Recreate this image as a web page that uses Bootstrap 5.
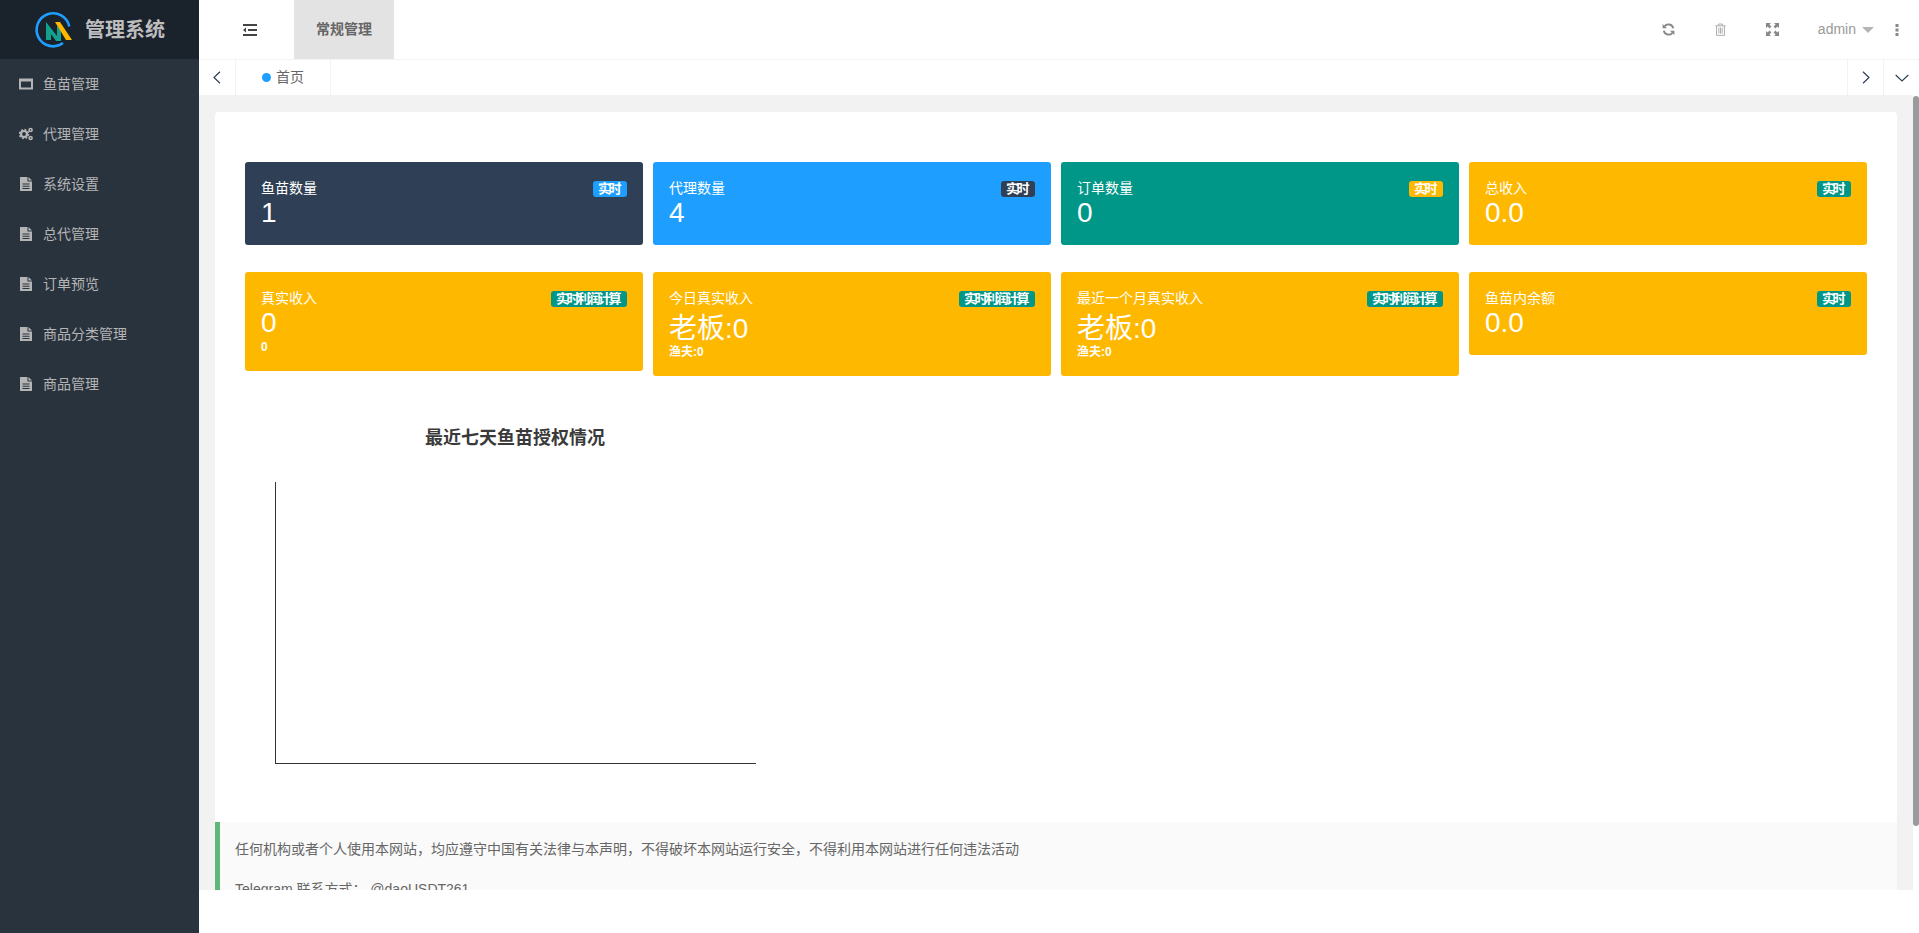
<!doctype html>
<html lang="zh-CN">
<head>
<meta charset="utf-8">
<title>管理系统</title>
<link rel="stylesheet" href="https://cdn.jsdelivr.net/npm/bootstrap@5.3.0/dist/css/bootstrap.min.css">
<style>
html,body{height:100%;overflow:hidden;background:#fff}
body{font-family:"Liberation Sans","Noto Sans CJK SC",sans-serif;font-size:14px;color:#666}
.shell{height:933px}
.side-col{width:199px;flex:none;background:#29333e}
.brand-bar{height:59px;background:#1a222c;color:#bdbdbd;font-size:20px;font-weight:700;padding-left:33px;gap:12px}
.side-link{height:50px;padding-left:19px;color:#b5b5b5;gap:10px;text-decoration:none}
.side-link svg{width:14px;height:14px;flex:none}
.main-col{min-width:0;flex:1}
.top-bar{height:60px;border-bottom:1px solid #f3f3f3}
.menu-btn{width:95px;padding-left:44px}
.top-tab{width:100px;height:59px;background:#e3e3e3;color:#666;font-weight:700;font-size:14px}
.tool-zone{margin-left:auto;color:#999}
.tool-ico{width:52px}
.user-name{font-size:14px;color:#999;margin-left:19px}
.caret-down{width:0;height:0;border-left:6px solid transparent;border-right:6px solid transparent;border-top:6px solid #b5b5b5;margin:0 19px 0 6px}
.dots-wrap{width:8px;margin-right:18px}
.tab-bar{height:35px}
.tab-cell{width:36px;height:35px;border-right:1px solid #f3f3f3}
.tab-cell.start-cell{width:37px}
.tab-cell.end-cell{border-right:0;border-left:1px solid #f3f3f3}
.home-tab{width:95px;height:35px;border-right:1px solid #f3f3f3;padding-left:26px;gap:5px;color:#666}
.live-dot{width:9px;height:9px;border-radius:50%;background:#1e9fff}
.scroll-pane{height:838px;overflow:hidden}
.pane-grey{height:795px;background:#f2f2f2;padding:17px 16px 0;overflow:hidden;min-width:0}
.fake-track{width:6px;flex:none;background:#fff}
.fake-thumb{height:730px;margin-top:1px;background:#9b9b9f;border-radius:3px}
.sheet{background:#fff;border-radius:4px 4px 0 0;min-height:900px}
.stat-zone{padding:50px 30px 0}
.stat-row{--bs-gutter-x:10px;--bs-gutter-y:0;margin-bottom:27px}
.stat-box{border:0;border-radius:3px;color:#fff;padding:16px}
.c-navy{background:#2f4056}.c-blue{background:#1e9fff}.c-teal{background:#009688}.c-amber{background:#ffb800}
.stat-title{line-height:20px;font-size:14px}
.stat-num{font-size:28px;line-height:29px;margin-bottom:2px}
.stat-num.tall{line-height:41px;margin-bottom:-5px}
.stat-sub{font-size:12px;line-height:16px;font-weight:700}
.tag-chip{height:16px;line-height:16px;font-size:13px;font-weight:700;letter-spacing:-2.5px;padding:0 8px 0 5px;border-radius:3px;color:#fff;margin-top:3px;flex:none}
.chart-wrap{width:540px;padding-top:23px}
.chart-title{font-size:18px;font-weight:700;color:#3a3a3a;line-height:24px;text-align:center}
.chart-axes{width:481px;height:282px;margin:32px 0 0 30px;border-left:1px solid #333;border-bottom:1px solid #333}
.note-bar{margin-top:58px;background:#fafafa;border-left:5px solid #5fb878;padding:17px 15px 15px;line-height:20px;font-size:14px;color:#666;height:120px}
.note-bar p{margin:0 0 20px}
</style>
</head>
<body>
<div class="shell d-flex">
  <aside class="side-col d-flex flex-column">
    <div class="brand-bar d-flex align-items-center">
      <svg width="40" height="40" viewBox="0 0 40 40" aria-hidden="true">
        <path d="M36.3 16.5A16.5 16.5 0 1 0 30 33" fill="none" stroke="#1e9fff" stroke-width="2.6"/>
        <polygon points="13,12 24,26 24,15 28,21 28,31 23,31 18,24 18,30 13,30" fill="#13a08f"/>
        <polygon points="22,12 27,12 39,30 33,30" fill="#ffb800"/>
      </svg>
      <span>管理系统</span>
    </div>
    <nav class="nav flex-column">
      <a class="side-link d-flex align-items-center" href="#">
        <svg viewBox="0 0 14 14"><path fill="#b5b5b5" fill-rule="evenodd" d="M0 1.5h14v11H0zM2 4.5v6h10v-6z"/></svg>鱼苗管理</a>
      <a class="side-link d-flex align-items-center" href="#">
        <svg viewBox="0 0 14 14"><circle cx="5" cy="7" r="3" fill="none" stroke="#b5b5b5" stroke-width="2.2"/><circle cx="5" cy="7" r="4.5" fill="none" stroke="#b5b5b5" stroke-width="1.6" stroke-dasharray="1.8 1.73"/><circle cx="11.6" cy="3" r="1.5" fill="none" stroke="#b5b5b5" stroke-width="1.6"/><circle cx="11.6" cy="11" r="1.5" fill="none" stroke="#b5b5b5" stroke-width="1.6"/></svg>代理管理</a>
      <a class="side-link d-flex align-items-center" href="#"><svg viewBox="0 0 14 14"><path fill="#b5b5b5" d="M1 0h7.5v4.5H13V14H1zM9.5 0 13 3.5H9.5z"/><path fill="#29333e" d="M3.5 6.5h7v1h-7zM3.5 8.7h7v1h-7zM3.5 10.9h7v1h-7z"/></svg>系统设置</a>
      <a class="side-link d-flex align-items-center" href="#"><svg viewBox="0 0 14 14"><path fill="#b5b5b5" d="M1 0h7.5v4.5H13V14H1zM9.5 0 13 3.5H9.5z"/><path fill="#29333e" d="M3.5 6.5h7v1h-7zM3.5 8.7h7v1h-7zM3.5 10.9h7v1h-7z"/></svg>总代管理</a>
      <a class="side-link d-flex align-items-center" href="#"><svg viewBox="0 0 14 14"><path fill="#b5b5b5" d="M1 0h7.5v4.5H13V14H1zM9.5 0 13 3.5H9.5z"/><path fill="#29333e" d="M3.5 6.5h7v1h-7zM3.5 8.7h7v1h-7zM3.5 10.9h7v1h-7z"/></svg>订单预览</a>
      <a class="side-link d-flex align-items-center" href="#"><svg viewBox="0 0 14 14"><path fill="#b5b5b5" d="M1 0h7.5v4.5H13V14H1zM9.5 0 13 3.5H9.5z"/><path fill="#29333e" d="M3.5 6.5h7v1h-7zM3.5 8.7h7v1h-7zM3.5 10.9h7v1h-7z"/></svg>商品分类管理</a>
      <a class="side-link d-flex align-items-center" href="#"><svg viewBox="0 0 14 14"><path fill="#b5b5b5" d="M1 0h7.5v4.5H13V14H1zM9.5 0 13 3.5H9.5z"/><path fill="#29333e" d="M3.5 6.5h7v1h-7zM3.5 8.7h7v1h-7zM3.5 10.9h7v1h-7z"/></svg>商品管理</a>
    </nav>
  </aside>
  <div class="main-col d-flex flex-column">
    <header class="top-bar d-flex align-items-center">
      <div class="menu-btn d-flex align-items-center">
        <svg width="14" height="12" viewBox="0 0 14 12"><path fill="#444" d="M0 0h14v2H0zM5 5h9v2H5zM0 10h14v2H0zM0 6l3-2.5v5z"/></svg>
      </div>
      <div class="top-tab d-flex align-items-center justify-content-center">常规管理</div>
      <div class="tool-zone d-flex align-items-center">
        <div class="tool-ico d-flex justify-content-center">
          <svg width="13" height="13" viewBox="0 0 13 13"><path d="M11.2 5.2A4.9 4.9 0 0 0 2.6 3.2M1.8 7.8A4.9 4.9 0 0 0 10.4 9.8" fill="none" stroke="#888" stroke-width="1.9"/><path fill="#888" d="M0.6 0.9v4.4h4.4zM12.4 12.1V7.7H8z"/></svg>
        </div>
        <div class="tool-ico d-flex justify-content-center">
          <svg width="11" height="13" viewBox="0 0 12 14"><path d="M.5 3h11M4 3V1h4v2M1.7 3v10.4h8.6V3M4.2 5v6.5M6 5v6.5M7.8 5v6.5" fill="none" stroke="#a5a5a5" stroke-width="1"/></svg>
        </div>
        <div class="tool-ico d-flex justify-content-center">
          <svg width="13" height="13" viewBox="0 0 13 13"><path fill="#888" d="M0 0h5L3.4 1.6l2 2-1.8 1.8-2-2L0 5zM13 0v5l-1.6-1.6-2 2-1.8-1.8 2-2L8 0zM0 13V8l1.6 1.6 2-2 1.8 1.8-2 2L5 13zM13 13H8l1.6-1.6-2-2 1.8-1.8 2 2L13 8z"/></svg>
        </div>
        <span class="user-name">admin</span><span class="caret-down"></span>
        <div class="dots-wrap d-flex flex-column align-items-center gap-1">
          <svg width="4" height="12" viewBox="0 0 4 12"><path fill="#888" d="M.5 0h3v3h-3zM.5 4.5h3v3h-3zM.5 9h3v3h-3z"/></svg>
        </div>
      </div>
    </header>
    <div class="tab-bar d-flex align-items-center">
      <div class="tab-cell start-cell d-flex align-items-center justify-content-center">
        <svg width="8" height="13" viewBox="0 0 8 13"><path d="M7 .7 1 6.5 7 12.3" fill="none" stroke="#2f4056" stroke-width="1.2"/></svg>
      </div>
      <div class="home-tab d-flex align-items-center"><span class="live-dot"></span>首页</div>
      <div class="flex-grow-1"></div>
      <div class="tab-cell end-cell d-flex align-items-center justify-content-center">
        <svg width="8" height="13" viewBox="0 0 8 13"><path d="M1 .7 7 6.5 1 12.3" fill="none" stroke="#2f4056" stroke-width="1.2"/></svg>
      </div>
      <div class="tab-cell end-cell d-flex align-items-center justify-content-center">
        <svg width="14" height="8" viewBox="0 0 14 8"><path d="M.7 1 7 7l6.3-6" fill="none" stroke="#2f4056" stroke-width="1.2"/></svg>
      </div>
    </div>
    <div class="scroll-pane d-flex align-items-start">
      <div class="pane-grey flex-grow-1">
        <div class="sheet">
          <div class="stat-zone">
            <div class="row stat-row align-items-start">
              <div class="col-3"><div class="card stat-box c-navy"><div class="d-flex justify-content-between align-items-start"><div class="stat-title">鱼苗数量</div><span class="tag-chip c-blue">实时</span></div><div class="stat-num">1</div></div></div>
              <div class="col-3"><div class="card stat-box c-blue"><div class="d-flex justify-content-between align-items-start"><div class="stat-title">代理数量</div><span class="tag-chip c-navy">实时</span></div><div class="stat-num">4</div></div></div>
              <div class="col-3"><div class="card stat-box c-teal"><div class="d-flex justify-content-between align-items-start"><div class="stat-title">订单数量</div><span class="tag-chip c-amber">实时</span></div><div class="stat-num">0</div></div></div>
              <div class="col-3"><div class="card stat-box c-amber"><div class="d-flex justify-content-between align-items-start"><div class="stat-title">总收入</div><span class="tag-chip c-teal">实时</span></div><div class="stat-num">0.0</div></div></div>
            </div>
            <div class="row stat-row align-items-start">
              <div class="col-3"><div class="card stat-box c-amber"><div class="d-flex justify-content-between align-items-start"><div class="stat-title">真实收入</div><span class="tag-chip c-teal">实时利润计算</span></div><div class="stat-num">0</div><div class="stat-sub">0</div></div></div>
              <div class="col-3"><div class="card stat-box c-amber"><div class="d-flex justify-content-between align-items-start"><div class="stat-title">今日真实收入</div><span class="tag-chip c-teal">实时利润计算</span></div><div class="stat-num tall">老板:0</div><div class="stat-sub">渔夫:0</div></div></div>
              <div class="col-3"><div class="card stat-box c-amber"><div class="d-flex justify-content-between align-items-start"><div class="stat-title">最近一个月真实收入</div><span class="tag-chip c-teal">实时利润计算</span></div><div class="stat-num tall">老板:0</div><div class="stat-sub">渔夫:0</div></div></div>
              <div class="col-3"><div class="card stat-box c-amber"><div class="d-flex justify-content-between align-items-start"><div class="stat-title">鱼苗内余额</div><span class="tag-chip c-teal">实时</span></div><div class="stat-num">0.0</div></div></div>
            </div>
            <div class="chart-wrap">
              <div class="chart-title">最近七天鱼苗授权情况</div>
              <div class="chart-axes"></div>
            </div>
          </div>
          <div class="note-bar">
            <p>任何机构或者个人使用本网站，均应遵守中国有关法律与本声明，不得破坏本网站运行安全，不得利用本网站进行任何违法活动</p>
            <p>Telegram 联系方式： @daoUSDT261</p>
          </div>
        </div>
      </div>
      <div class="fake-track"><div class="fake-thumb"></div></div>
    </div>
  </div>
</div>
<script src="https://cdn.jsdelivr.net/npm/bootstrap@5.3.0/dist/js/bootstrap.bundle.min.js"></script>
</body>
</html>
